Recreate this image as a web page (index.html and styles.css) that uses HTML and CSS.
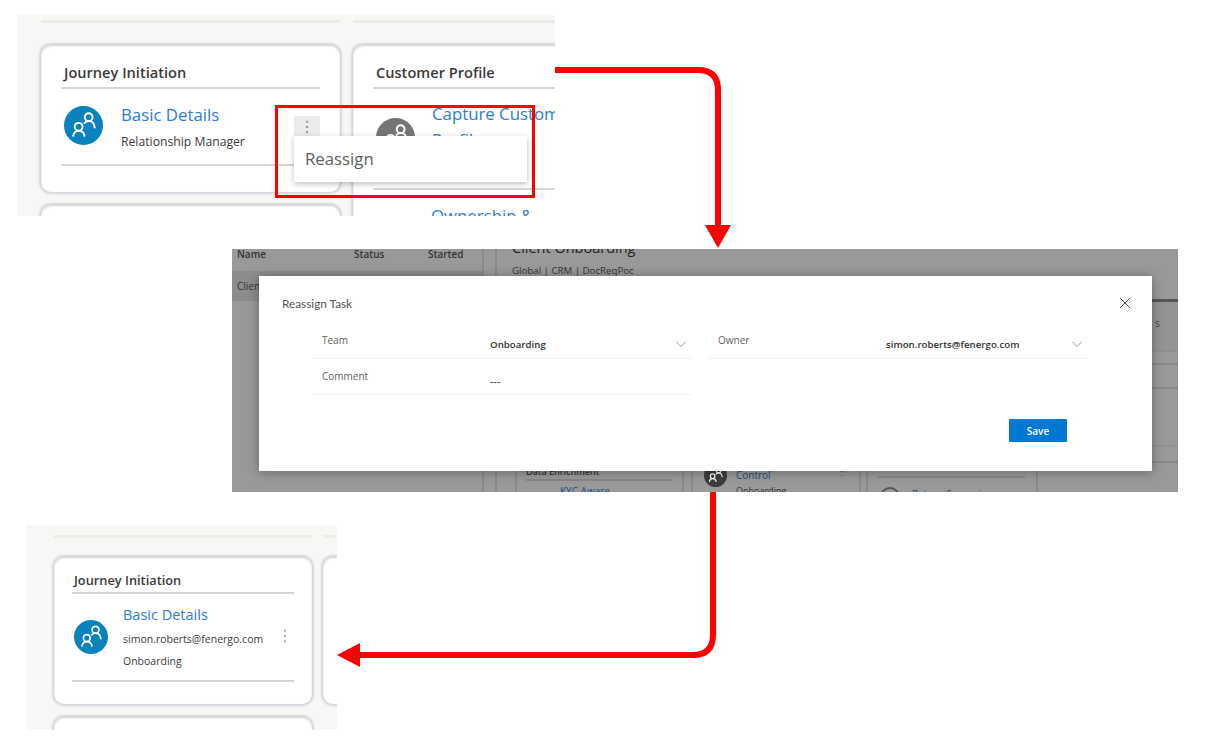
FILE: index.html
```html
<!DOCTYPE html>
<html lang="en">
<head>
    <meta charset="UTF-8">
    <title>Reassign Task</title>
    <link rel="stylesheet" href="styles.css">
</head>
<body>
    <svg class="defs" width="0" height="0">
        <symbol id="people" viewBox="0 0 40 40">
            <circle cx="20" cy="20" r="20" fill="currentColor"/>
            <g fill="none" stroke="#fff" stroke-width="2" stroke-linecap="round">
                <circle cx="25.3" cy="11.5" r="4"/>
                <circle cx="15" cy="21.3" r="4"/>
                <path d="M9.5 30.5C10 27 12 25.5 15 25.5S20.500 27 21 30.500"/>
                <path d="M21 17.500C22 16 23.500 15.500 25.500 15.500C29 15.500 31 17.500 31.500 22"/>
            </g>
        </symbol>
    </svg>

    <section class="shot shot-before">
        <div class="board">
            <div class="column">
                <div class="column-rule"></div>
                <div class="card">
                    <h3 class="card-title">Journey Initiation</h3>
                    <div class="task">
                        <svg class="task-icon"><use href="#people"/></svg>
                        <div class="task-text">
                            <a class="task-link">Basic Details</a>
                            <p class="task-meta">Relationship Manager</p>
                        </div>
                        <button class="dots dots-active">⋮</button>
                    </div>
                </div>
                <div class="card"></div>
            </div>
            <div class="column">
                <div class="column-rule"></div>
                <div class="card card-open">
                    <h3 class="card-title">Customer Profile</h3>
                    <div class="task task-tall">
                        <svg class="task-icon task-icon-grey"><use href="#people"/></svg>
                        <div class="task-text">
                            <a class="task-link">Capture Customer Profile</a>
                        </div>
                    </div>
                    <div class="task-next">
                        <a class="task-link">Ownership &amp;<br>Control</a>
                    </div>
                </div>
            </div>
        </div>
        <div class="menu">Reassign</div>
        <div class="callout"></div>
    </section>

    <section class="shot shot-dialog">
        <div class="backdrop">
            <div class="case-list">
                <div class="case-head"><span>Name</span><span>Status</span><span>Started</span></div>
                <div class="case-row">Client</div>
            </div>
            <div class="case-main">
                <h2 class="case-title">Client Onboarding</h2>
                <p class="case-sub">Global | CRM | DocReqPoc</p>
                <div class="case-strip">
                    <div class="strip-row strip-tab">s</div>
                    <div class="strip-row strip-b"></div>
                    <div class="strip-row strip-c"></div>
                    <div class="strip-row strip-d"></div>
                    <div class="strip-row strip-e"></div>
                </div>
                <div class="case-cards">
                    <div class="mini-card mini-data">
                        <div class="mini-title">Data Enrichment</div>
                        <a class="mini-link mini-kyc">KYC Aware</a>
                    </div>
                    <div class="mini-card mini-task">
                        <svg class="mini-icon"><use href="#people"/></svg>
                        <div class="mini-text">
                            <a class="mini-link">Control</a>
                            <div class="mini-meta">Onboarding</div>
                        </div>
                        <span class="mini-dots">⋮</span>
                    </div>
                    <div class="mini-card mini-screen">
                        <div class="mini-rule"></div>
                        <div class="mini-row">
                            <span class="mini-ring"></span>
                            <a class="mini-link">Return Screening</a>
                        </div>
                    </div>
                </div>
            </div>
        </div>
        <div class="modal">
            <div class="modal-head">
                <h2 class="modal-title">Reassign Task</h2>
                <svg class="modal-close" viewBox="0 0 10 10"><path d="M0 0L10 10M10 0L0 10"/></svg>
            </div>
            <div class="fields">
                <div class="field">
                    <span class="field-label">Team</span>
                    <span class="field-value">Onboarding</span>
                    <svg class="chevron" viewBox="0 0 10 6"><path d="M0 .5L5 5.500L10 .5"/></svg>
                </div>
                <div class="field">
                    <span class="field-label">Owner</span>
                    <span class="field-value">simon.roberts@fenergo.com</span>
                    <svg class="chevron" viewBox="0 0 10 6"><path d="M0 .5L5 5.500L10 .5"/></svg>
                </div>
                <div class="field field-comment">
                    <span class="field-label">Comment</span>
                    <span class="field-value field-empty">---</span>
                </div>
            </div>
            <div class="modal-foot">
                <button class="save">Save</button>
            </div>
        </div>
    </section>

    <section class="shot shot-after">
        <div class="column">
            <div class="column-rule"></div>
            <div class="card">
                <h3 class="card-title">Journey Initiation</h3>
                <div class="task">
                    <svg class="task-icon"><use href="#people"/></svg>
                    <div class="task-text">
                        <a class="task-link">Basic Details</a>
                        <p class="task-meta">simon.roberts@fenergo.com</p>
                        <p class="task-meta">Onboarding</p>
                    </div>
                    <button class="dots">⋮</button>
                </div>
            </div>
            <div class="card"></div>
        </div>
        <div class="column">
            <div class="column-rule"></div>
            <div class="card"></div>
        </div>
    </section>

    <svg class="arrows" width="1209" height="741" viewBox="0 0 1209 741">
        <path class="arrow-line" d="M555 70H698Q718 70 718 90V228"/>
        <path class="arrow-head" d="M705 225H731L718 248Z"/>
        <path class="arrow-line" d="M713 492V635Q713 655 693 655H358"/>
        <path class="arrow-head" d="M360 643V667L337 655Z"/>
    </svg>
</body>
</html>
```

FILE: styles.css
```css
body {
    margin: 0;
    width: 1209px;
    height: 741px;
    position: relative;
    overflow: hidden;
    background: #fff;
    font-family: "Open Sans", Arial, sans-serif;
    color: #333;
}

h2, h3, p {
    margin: 0;
    font-weight: normal;
}

.defs {
    position: absolute;
}

/* the three pasted screenshots sit freely on the slide */
.shot {
    position: absolute;
    overflow: hidden;
}

.shot-before {
    left: 17px;
    top: 15px;
    width: 538px;
    height: 201px;
    background: #f8f7f5;
}

.shot-dialog {
    left: 232px;
    top: 249px;
    width: 946px;
    height: 243px;
    background: #999;
}

.shot-after {
    left: 26px;
    top: 525px;
    width: 311px;
    height: 205px;
    background: #f8f7f5;
    display: flex;
    gap: 9px;
    padding-left: 27px;
    box-sizing: border-box;
}

.board {
    display: flex;
    gap: 11px;
    padding-left: 23px;
}

.column {
    width: 301px;
    flex: none;
}

.shot-after .column {
    width: 260px;
}

.column-rule {
    height: 3px;
    margin: 5px 1px 21px;
    background: #eeece9;
}

.shot-after .column-rule {
    margin: 10px 1px 18px;
}

.card {
    box-sizing: border-box;
    height: 149px;
    margin-bottom: 11px;
    padding: 0 20px;
    background: #fff;
    border: 1px solid #d3d6da;
    border-radius: 11px;
    box-shadow: inset 0 1px 2px #d0d3d7, 0 0 2px 1px #d5d8dc;
}

.shot-after .card {
    height: 149px;
    padding: 0 18px;
}

.card-open {
    width: 260px;
    height: 240px;
}

.card-title {
    padding: 17px 3px 5px;
    border-bottom: 2px solid #d6d6d6;
    font-size: 14.600px;
    font-weight: 600;
    line-height: 20px;
    color: #3b3a39;
}

.shot-after .card-title {
    padding: 13px 2px 2px;
    font-size: 12.800px;
    line-height: 20px;
}

.task {
    display: flex;
    align-items: center;
    height: 75px;
    border-bottom: 2px solid #d6d6d6;
}

.task-tall {
    height: 99px;
    align-items: flex-start;
}

.shot-after .task {
    height: 86px;
}

.task-icon {
    flex: none;
    width: 39px;
    height: 39px;
    margin: -2px 18px 0 3px;
    color: #0a82bd;
}

.task-icon-grey {
    margin-top: 29px;
    margin-right: 17px;
    color: #757575;
}

.shot-after .task-icon {
    width: 34px;
    height: 34px;
    margin: 0 15px 0 2px;
}

.task-text {
    flex: 1;
    min-width: 0;
}

.task-tall .task-text {
    padding-top: 12px;
}

.task-link {
    display: block;
    font-size: 16.800px;
    line-height: 23px;
    color: #2b7cd3;
}

.task-tall .task-link {
    width: 160px;
    line-height: 26px;
}

.shot-after .task-link {
    font-size: 14.500px;
    line-height: 20px;
}

.task-meta {
    margin-top: 7px;
    font-size: 12.200px;
    line-height: 18px;
    color: #3b3a39;
}

.shot-after .task-meta {
    margin-top: 6px;
    font-size: 10.500px;
    line-height: 16px;
}

.task-next {
    padding: 14px 0 0 58px;
}

.dots {
    flex: none;
    width: 20px;
    height: 21px;
    margin: -4px -1px 0 0;
    padding: 0;
    border: none;
    background: transparent;
    font: 16px/21px "DejaVu Sans", sans-serif;
    color: #a19f9d;
}

.dots-active {
    align-self: flex-start;
    width: 26px;
    margin: 27px 0 0;
    background: #edebe9;
    color: #8a8886;
}

.menu {
    position: absolute;
    left: 277px;
    top: 121px;
    width: 222px;
    height: 46px;
    padding-left: 11px;
    background: #fff;
    box-shadow: 0 2px 6px rgba(0, 0, 0, 0.25);
    font-size: 16.800px;
    line-height: 46px;
    color: #605e5c;
}

.callout {
    position: absolute;
    left: 258px;
    top: 90px;
    width: 254px;
    height: 87px;
    border: 3px solid #f00;
}

/* dimmed page behind the dialog */
.backdrop {
    display: flex;
    height: 100%;
    color: #333;
    font-size: 10px;
}

.case-list {
    width: 250px;
    flex: none;
    border-right: 2px solid #8a8a8a;
}

.case-head {
    display: grid;
    grid-template-columns: 117px 74px 1fr;
    padding: 0 0 0 5px;
    height: 22px;
    line-height: 11px;
    font-weight: 600;
}

.case-row {
    height: 30px;
    padding-left: 5px;
    background: #8c8c8c;
    line-height: 30px;
}

.case-main {
    position: relative;
    flex: 1;
    margin-left: 11px;
    border-left: 2px solid #8a8a8a;
    padding-left: 15px;
}

.case-title {
    margin-top: -11px;
    font-size: 14.500px;
    line-height: 20px;
    color: #222;
}

.case-sub {
    margin-top: 6px;
    font-size: 9.700px;
    line-height: 14px;
}

.case-strip {
    position: absolute;
    right: 0;
    top: 50px;
    width: 26px;
    border-top: 3px solid #555;
}

.strip-row {
    box-sizing: border-box;
    border-bottom: 2px solid #898989;
}

.strip-tab {
    height: 50px;
    background: #939393;
    border-bottom-color: #8f8f8f;
    line-height: 42px;
    padding-left: 3px;
    color: #445;
}

.strip-b {
    height: 13px;
}

.strip-c {
    height: 24px;
}

.strip-d {
    height: 58px;
    border-bottom-color: #909090;
}

.strip-e {
    height: 16px;
}

.case-cards {
    position: absolute;
    left: 18px;
    top: 190px;
    display: flex;
}

.mini-card {
    box-sizing: border-box;
    height: 60px;
    border: 2px solid #8a8a8a;
    border-top: none;
}

.mini-data {
    width: 169px;
    margin-right: 7px;
    padding-top: 26px;
}

.mini-title {
    margin: 0 10px 0 9px;
    font-size: 9px;
    line-height: 14px;
    font-weight: 600;
    border-bottom: 2px solid #858585;
}

.mini-link {
    color: #1f4e79;
    font-size: 10px;
}

.mini-kyc {
    display: block;
    padding: 3px 0 0 43px;
}

.mini-task {
    display: flex;
    gap: 9px;
    width: 170px;
    margin-right: 5px;
    padding: 25px 0 0 11px;
}

.mini-icon {
    flex: none;
    width: 23px;
    height: 23px;
    color: #3c3c3c;
}

.mini-text {
    padding-top: 4px;
}

.mini-meta {
    margin-top: 2px;
    font-size: 9px;
}

.mini-dots {
    margin-left: auto;
    margin-right: 12px;
    color: #555;
}

.mini-screen {
    width: 172px;
    padding-top: 37px;
}

.mini-rule {
    height: 2px;
    margin: 0 11px 0 10px;
    background: #858585;
}

.mini-row {
    display: flex;
    gap: 12px;
    padding: 9px 0 0 12px;
}

.mini-ring {
    flex: none;
    width: 16px;
    height: 16px;
    border: 2px solid #555;
    border-radius: 50%;
}

.modal {
    position: absolute;
    left: 27px;
    top: 27px;
    width: 893px;
    height: 195px;
    box-sizing: border-box;
    padding: 0 27px 0 23px;
    background: #fff;
    box-shadow: 0 1px 10px rgba(0, 0, 0, 0.35);
}

.modal-head {
    display: flex;
    justify-content: space-between;
    align-items: flex-start;
    padding-top: 22px;
}

.modal-title {
    font-family: Lato, "Open Sans", sans-serif;
    font-size: 11.800px;
    line-height: 12px;
    color: #555;
}

.modal-close {
    width: 10px;
    height: 10px;
    margin-right: -5px;
    fill: none;
    stroke: #444;
    stroke-width: 1;
}

.fields {
    display: grid;
    grid-template-columns: 380px 380px;
    column-gap: 16px;
    margin: 18px 0 0 30px;
}

.field {
    position: relative;
    display: grid;
    grid-template-columns: 168px 1fr;
    height: 31px;
    box-sizing: border-box;
    padding-left: 10px;
    border-bottom: 1px solid #f3f2f1;
    align-items: start;
}

.field-comment {
    height: 36px;
    padding-top: 5px;
}

.field-label {
    padding-top: 5px;
    font-size: 10px;
    line-height: 14px;
    color: #605e5c;
}

.field-value {
    padding-top: 10px;
    font-size: 9.700px;
    line-height: 14px;
    font-weight: 600;
    color: #323130;
}

.field-empty {
    padding-top: 10px;
    font-size: 11px;
    font-weight: normal;
}

.chevron {
    position: absolute;
    right: 6px;
    top: 13px;
    width: 10px;
    height: 6px;
    fill: none;
    stroke: #a19f9d;
    stroke-width: 1;
}

.modal-foot {
    display: flex;
    justify-content: flex-end;
    padding: 24px 58px 0 0;
}

.save {
    width: 58px;
    height: 23px;
    padding: 0;
    border: none;
    border-radius: 1px;
    background: #0078d4;
    color: #fff;
    font: 600 10px "Open Sans", Arial, sans-serif;
}

.arrows {
    position: absolute;
    left: 0;
    top: 0;
    pointer-events: none;
}

.arrow-line {
    fill: none;
    stroke: #f00;
    stroke-width: 6;
}

.arrow-head {
    fill: #f00;
}
```
